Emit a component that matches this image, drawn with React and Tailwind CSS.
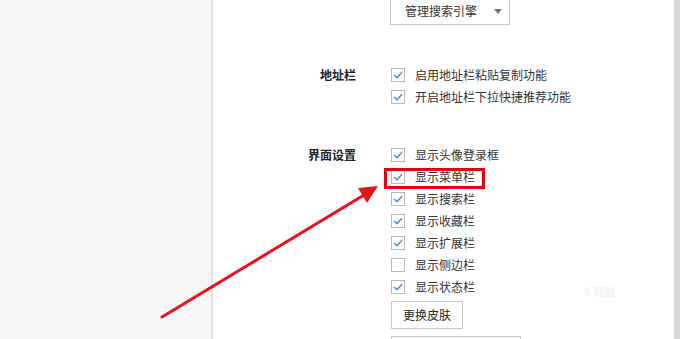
import React from "react";

const font = { fontFamily: '"Noto Sans CJK SC", "Microsoft YaHei", sans-serif' };

function Check({ checked }) {
  return (
    <span className="w-[14px] h-[14px] border border-[#b9b9b9] bg-white flex items-center justify-center shrink-0">
      {checked && (
        <svg width="10" height="8" viewBox="0 0 10 8">
          <path d="M1 4 L4 6.6 L9 1.2" fill="none" stroke="#5a8fd2" strokeWidth="1.6" />
        </svg>
      )}
    </span>
  );
}

function Row({ label, checked = true, highlight = false }) {
  return (
    <div className="h-[22px] shrink-0 flex items-center relative">
      <Check checked={checked} />
      <span className="ml-[10px] text-[12px] text-[#333] leading-none">{label}</span>
      {highlight && (
        <div className="absolute left-[-7px] top-[2px] w-[101px] h-[21px] border-[3px] border-[#e60012]" />
      )}
    </div>
  );
}

function Section({ title, children }) {
  return (
    <div className="flex shrink-0">
      <div className="w-[143px] h-[22px] flex items-center justify-end text-[12px] font-bold text-[#222]">{title}</div>
      <div className="ml-[35px] flex flex-col">{children}</div>
    </div>
  );
}

export default function App() {
  return (
    <div className="w-[680px] h-[339px] flex overflow-hidden relative bg-white" style={font}>
      <div className="w-[211px] h-full bg-[#f7f7f7] shrink-0" />
      <div className="w-[2px] h-full bg-[#e2e2e2] shrink-0" />
      <div className="flex-1 flex flex-col overflow-hidden">
        <div className="shrink-0 ml-[177px] -mt-[3px] w-[120px] h-[28px] border border-[#c8c8c8] flex items-center">
          <span className="ml-[14px] text-[12px] text-[#333]">管理搜索引擎</span>
          <span className="ml-[17px] w-0 h-0 border-l-[4px] border-r-[4px] border-t-[5px] border-l-transparent border-r-transparent border-t-[#777]" />
        </div>
        <div className="mt-[39px] shrink-0">
          <Section title="地址栏">
            <Row label="启用地址栏粘贴复制功能" />
            <Row label="开启地址栏下拉快捷推荐功能" />
          </Section>
        </div>
        <div className="mt-[36px] shrink-0">
          <Section title="界面设置">
            <Row label="显示头像登录框" />
            <Row label="显示菜单栏" highlight />
            <Row label="显示搜索栏" />
            <Row label="显示收藏栏" />
            <Row label="显示扩展栏" />
            <Row label="显示侧边栏" checked={false} />
            <Row label="显示状态栏" />
            <div className="shrink-0 mt-[3px] w-[72px] h-[28px] border border-[#c8c8c8] flex items-center justify-center text-[12px] text-[#222]">更换皮肤</div>
            <div className="shrink-0 mt-[7px] w-[130px] h-[20px] border border-[#c8c8c8]" />
          </Section>
        </div>
      </div>
      <div className="w-[6px] h-full bg-[#d6d6d6] shrink-0" />
      <div className="absolute left-[584px] top-[286px] text-[11px] text-[#f3f3f3] font-bold leading-none">S 经验</div>
      <svg className="absolute left-0 top-0 pointer-events-none" width="680" height="339">
        <line x1="162" y1="317" x2="364" y2="195" stroke="#e8121b" strokeWidth="3" strokeLinecap="round" />
        <polygon points="378,186 358,188 367,203" fill="#e8121b" />
      </svg>
    </div>
  );
}
